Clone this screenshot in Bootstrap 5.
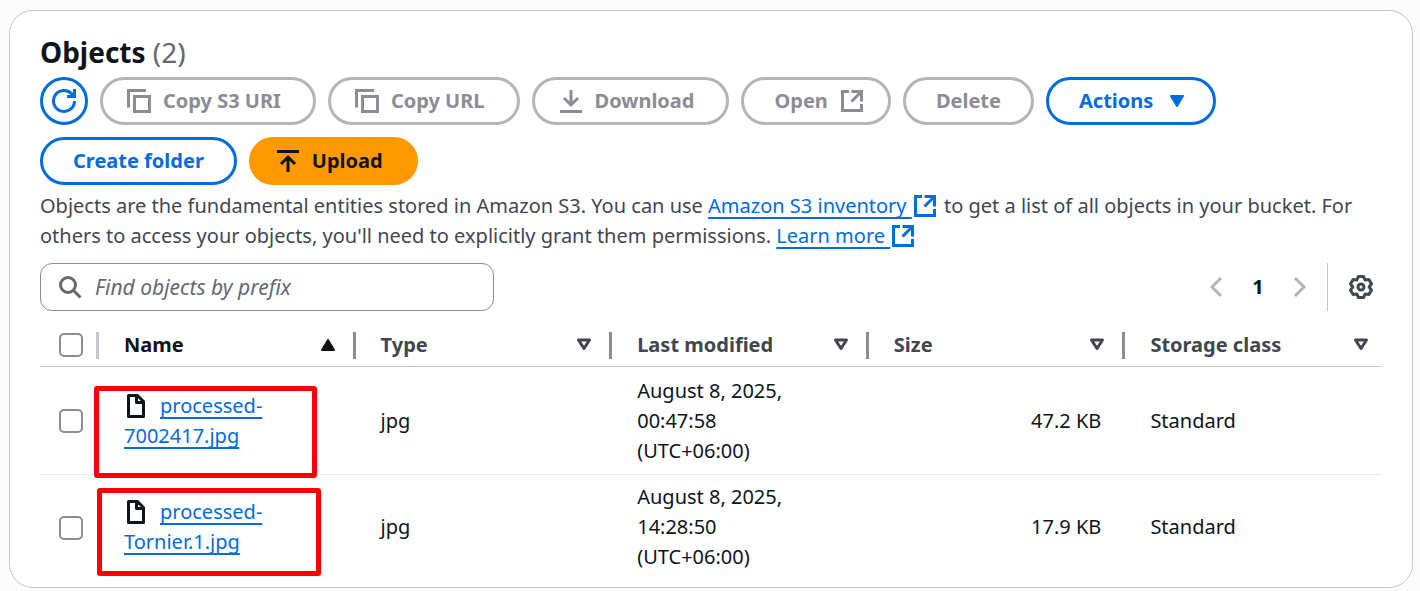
<!DOCTYPE html>
<html lang="en">
<head>
<meta charset="utf-8">
<meta name="viewport" content="width=device-width, initial-scale=1">
<title>Objects</title>
<link href="https://cdn.jsdelivr.net/npm/bootstrap@5.3.0/dist/css/bootstrap.min.css" rel="stylesheet">
<style>
:root { --blue: #006ce0; --ink: #0f141a; --body-ink: #424650; --muted: #8c8c94; --line: #c6c6cd; }
body { background: #fcfcfd; color: var(--ink); font: 400 20px/30px "Noto Sans", sans-serif; }
.page-pad { padding: 10px 7px 2px 9px; }
.panel { border: 1px solid var(--line); border-radius: 24px; background: #fff; padding: 23px 30px 7px; }
.panel-title { font-size: 28px; line-height: 36px; font-weight: 700; margin: 0 0 7px; }
.panel-title span { font-weight: 400; color: #656871; }
.toolbar { gap: 12px; }
.pill { height: 48px; border: 3px solid var(--blue); border-radius: 24px; padding: 0 30px; color: var(--blue); background: #fff; font-size: 20px; line-height: 30px; font-weight: 700; gap: 12px; display: inline-flex; align-items: center; justify-content: center; }
.pill:hover { color: #002b66; border-color: #002b66; background: #f0fbff; }
.pill:disabled { color: var(--muted); border-color: #b4b4bb; background: #fff; opacity: 1; }
.pill.with-icon { padding-left: 24px; padding-right: 32px; }
.pill.menu { gap: 16px; padding-right: 28px; }
.pill.round { width: 48px; padding: 0; }
.pill.upload, .pill.upload:hover { background: #ff9900; border-color: #ff9900; color: var(--ink); }
.pill svg { flex: none; }
.ic { width: 24px; height: 24px; fill: none; stroke: currentColor; stroke-width: 3; }
.about { color: var(--body-ink); margin: 6px 0 12px; }
.s3-link { color: var(--blue); text-decoration: underline 2px; text-underline-offset: 4px; text-decoration-skip-ink: none; }
.about .ic { color: var(--blue); vertical-align: -5px; margin: 0 2px 0 1px; }
.finder { width: 454px; max-width: 100%; height: 48px; border: 1px solid var(--muted); border-radius: 12px; padding: 0 17px; gap: 13px; color: #656871; }
.finder input { border: 0; outline: 0; background: none; padding: 0; min-width: 0; flex: 1; color: var(--ink); font-size: 21px; line-height: 30px; }
.finder input::placeholder { font-style: italic; color: #656871; opacity: 1; }
.plain { border: 0; background: none; padding: 0; display: inline-flex; align-items: center; justify-content: center; }
.pager { gap: 24px; height: 48px; margin-right: 9px; }
.pager .plain { color: #b4b4bb; }
.pager b { width: 12px; text-align: center; }
.pager .gear { color: var(--body-ink); border-left: 1px solid var(--line); height: 48px; padding-left: 21px; margin-left: -9px; }
.objects { table-layout: fixed; width: 100%; margin-top: 12px; border-collapse: separate; border-spacing: 0; }
.objects .pick { width: 59px; }
.objects th { height: 44px; padding: 0 20px 0 25px; border-bottom: 1px solid var(--line); color: var(--body-ink); font-weight: 700; position: relative; vertical-align: middle; }
.objects th:last-child { padding-right: 13px; }
.objects th.sorted { color: var(--ink); }
.objects th:not(:last-child)::after { content: ""; position: absolute; right: 0; top: 9px; width: 3px; height: 27px; background: var(--muted); }
.objects th:first-child::after { background: var(--line); }
.objects th .plain { width: 100%; justify-content: space-between; color: inherit; font-weight: 700; }
.objects td { padding: 9px 24px 8px 25px; vertical-align: middle; border-bottom: 1px solid #ebebf0; position: relative; }
.objects tr:last-child td { border-bottom: 0; padding-top: 7px; }
.objects tr th.pick, .objects tr td.pick { padding: 0 0 0 19px; }
.objects input { appearance: none; display: block; width: 24px; height: 24px; margin: 0; border: 2px solid var(--muted); border-radius: 5px; background: #fff; }
.objects input:checked { background: var(--blue); border-color: var(--blue); }
.doc { width: 24px; height: 26px; vertical-align: -6px; margin-right: 12px; }
.callout { position: absolute; border: 5px solid #f00; border-radius: 3px; pointer-events: none; }
.callout.first { left: -5px; top: 19px; width: 223px; height: 92px; }
.callout.second { left: -2px; top: 13px; width: 224px; height: 88px; }
</style>
</head>
<body>
<svg class="d-none" aria-hidden="true">
  <symbol id="copy" viewBox="0 0 24 24"><path d="M19 1.500H1.500V18.500M7.500 7.500h15v15h-15z"/></symbol>
  <symbol id="external" viewBox="0 0 24 24"><path d="M9 2.500H2.500v19h19V15M11.500 2.500h10V12.500M21 3l-9.500 9.500"/></symbol>
  <symbol id="down" viewBox="0 0 16 12"><path d="M2 1h12l-6 10z" fill="currentColor" stroke="currentColor" stroke-width="2" stroke-linejoin="round"/></symbol>
  <symbol id="down-open" viewBox="0 0 16 13"><path d="M2.500 2h11L8 10.500z" fill="none" stroke="currentColor" stroke-width="3" stroke-linejoin="round"/></symbol>
  <symbol id="file" viewBox="0 0 24 26"><path d="M4.500 2.500h9l6 6v15h-15zM12.500 2.500v7h7" stroke-linejoin="round"/></symbol>
</svg>
<main class="page-pad">
<section class="panel">
  <h2 class="panel-title">Objects <span>(2)</span></h2>
  <div class="toolbar d-flex flex-wrap">
    <button type="button" class="btn pill round" aria-label="Refresh"><svg class="ic" viewBox="0 0 24 24"><path d="M22.500 12A10.500 10.500 0 1 1 19.500 4.600L22 7.500M22.500 0v7.500H15"/></svg></button>
    <button type="button" class="btn pill with-icon" disabled><svg class="ic"><use href="#copy"/></svg>Copy S3 URI</button>
    <button type="button" class="btn pill with-icon" disabled><svg class="ic"><use href="#copy"/></svg>Copy URL</button>
    <button type="button" class="btn pill with-icon" disabled><svg class="ic" viewBox="0 0 24 24"><path d="M12 1v15M5 9l7 7 7-7M1 22.500h22"/></svg>Download</button>
    <button type="button" class="btn pill pe-4" disabled>Open<svg class="ic"><use href="#external"/></svg></button>
    <button type="button" class="btn pill" disabled>Delete</button>
    <button type="button" class="btn pill menu">Actions<svg width="16" height="12"><use href="#down"/></svg></button>
    <button type="button" class="btn pill">Create folder</button>
    <button type="button" class="btn pill upload with-icon"><svg class="ic" viewBox="0 0 24 24"><path d="M12 23V8M5 15l7-7 7 7M1 2.500h22"/></svg>Upload</button>
  </div>
  <p class="about">Objects are the fundamental entities stored in Amazon S3. You can use <a class="s3-link" href="#">Amazon S3 inventory&nbsp;</a><svg class="ic"><use href="#external"/></svg> to get a list of all objects in your bucket. For others to access your objects, you'll need to explicitly grant them permissions. <a class="s3-link" href="#">Learn more&nbsp;</a><svg class="ic"><use href="#external"/></svg></p>
  <div class="d-flex justify-content-between align-items-center">
    <label class="finder d-flex align-items-center">
      <svg class="ic" viewBox="0 0 24 24"><circle cx="10" cy="10" r="7.500"/><path d="M15.500 15.500l7 7"/></svg>
      <input type="text" placeholder="Find objects by prefix" aria-label="Find objects by prefix">
    </label>
    <nav class="pager d-flex align-items-center" aria-label="Pages">
      <button type="button" class="plain" aria-label="Previous page"><svg class="ic" viewBox="0 0 24 24"><path d="M17 3l-9 9 9 9"/></svg></button>
      <b>1</b>
      <button type="button" class="plain" aria-label="Next page"><svg class="ic" viewBox="0 0 24 24"><path d="M7 3l9 9-9 9"/></svg></button>
      <button type="button" class="plain gear" aria-label="Preferences"><svg class="ic" viewBox="0 0 24 24"><path d="M9.500 1.500h5l1.600 3.400 3.800-.3 2.600 4.200-2.300 3.200 2.300 3.200-2.600 4.200-3.800-.3-1.600 3.400h-5l-1.600-3.400-3.800.3-2.600-4.200L3.800 12 1.500 8.800 4.100 4.600l3.800.3z" stroke-linejoin="round"/><circle cx="12" cy="12" r="3"/></svg></button>
    </nav>
  </div>
  <table class="objects">
    <thead>
      <tr>
        <th class="pick"><input type="checkbox" aria-label="Select all objects"></th>
        <th class="sorted"><button type="button" class="plain">Name<svg width="16" height="12" viewBox="0 0 16 12"><path d="M2 11h12L8 1z" fill="currentColor" stroke="currentColor" stroke-width="2" stroke-linejoin="round"/></svg></button></th>
        <th><button type="button" class="plain">Type<svg width="16" height="13"><use href="#down-open"/></svg></button></th>
        <th><button type="button" class="plain">Last modified<svg width="16" height="13"><use href="#down-open"/></svg></button></th>
        <th><button type="button" class="plain">Size<svg width="16" height="13"><use href="#down-open"/></svg></button></th>
        <th><button type="button" class="plain">Storage class<svg width="16" height="13"><use href="#down-open"/></svg></button></th>
      </tr>
    </thead>
    <tbody>
      <tr>
        <td class="pick"><input type="checkbox" aria-label="Select processed-7002417.jpg"></td>
        <td><svg class="ic doc"><use href="#file"/></svg><a class="s3-link" href="#">processed-<wbr>7002417.jpg</a><span class="callout first"></span></td>
        <td>jpg</td>
        <td>August 8, 2025,<br>00:47:58<br>(UTC+06:00)</td>
        <td class="text-end">47.2 KB</td>
        <td>Standard</td>
      </tr>
      <tr>
        <td class="pick"><input type="checkbox" aria-label="Select processed-Tornier.1.jpg"></td>
        <td><svg class="ic doc"><use href="#file"/></svg><a class="s3-link" href="#">processed-<wbr>Tornier.1.jpg</a><span class="callout second"></span></td>
        <td>jpg</td>
        <td>August 8, 2025,<br>14:28:50<br>(UTC+06:00)</td>
        <td class="text-end">17.9 KB</td>
        <td>Standard</td>
      </tr>
    </tbody>
  </table>
</section>
</main>
<script src="https://cdn.jsdelivr.net/npm/bootstrap@5.3.0/dist/js/bootstrap.bundle.min.js"></script>
</body>
</html>
